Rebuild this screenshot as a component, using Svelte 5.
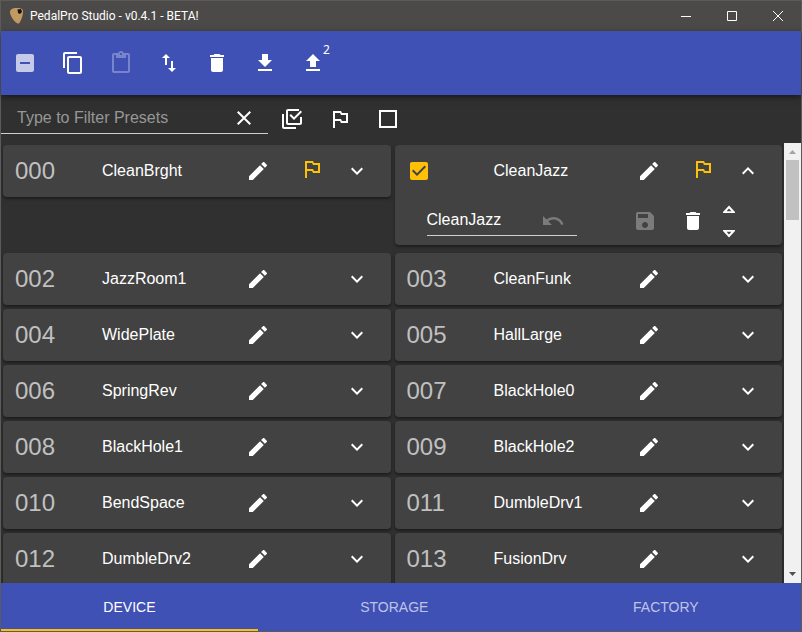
<script>
  const icons = {
    indeterminate: 'M19 3H5c-1.1 0-2 .9-2 2v14c0 1.1.9 2 2 2h14c1.1 0 2-.9 2-2V5c0-1.1-.9-2-2-2zm-2 10H7v-2h10v2z',
    copy: 'M16 1H4c-1.1 0-2 .9-2 2v14h2V3h12V1zm3 4H8c-1.1 0-2 .9-2 2v14c0 1.1.9 2 2 2h11c1.1 0 2-.9 2-2V7c0-1.1-.9-2-2-2zm0 16H8V7h11v14z',
    paste: 'M19 2h-4.18C14.4.84 13.3 0 12 0c-1.3 0-2.4.84-2.82 2H5c-1.1 0-2 .9-2 2v16c0 1.1.9 2 2 2h14c1.1 0 2-.9 2-2V4c0-1.1-.9-2-2-2zm-7 0c.55 0 1 .45 1 1s-.45 1-1 1-1-.45-1-1 .45-1 1-1zm7 18H5V4h2v3h10V4h2v16z',
    swap: 'M9 3L5 6.99h3V14h2V6.99h3L9 3zm7 14.01V10h-2v7.01h-3L15 21l4-3.99h-3z',
    trash: 'M6 19c0 1.1.9 2 2 2h8c1.1 0 2-.9 2-2V7H6v12zM19 4h-3.5l-1-1h-5l-1 1H5v2h14V4z',
    download: 'M19 9h-4V3H9v6H5l7 7 7-7zM5 18v2h14v-2H5z',
    upload: 'M9 16h6v-6h4l-7-7-7 7h4zm-4 2h14v2H5z',
    close: 'M19 6.41L17.59 5 12 10.59 6.41 5 5 6.41 10.59 12 5 17.59 6.41 19 12 13.41 17.59 19 19 17.59 13.41 12z',
    selectAll: 'M20 16V10h2v6c0 1.1-.9 2-2 2H8c-1.1 0-2-.9-2-2V4c0-1.1.9-2 2-2h11v2H8v12h12zM10.91 7.08L14 10.17 20.59 3.58 22 5l-8 8-4.5-4.5 1.41-1.42zM16 20v2H4c-1.1 0-2-.9-2-2V7h2v13h12z',
    flag: 'M14 6l-1-2H5v17h2v-7h5l1 2h7V6h-6zm4 8h-4l-1-2H7V6h5l1 2h5v6z',
    square: 'M19 5v14H5V5h14m2-2H3v18h18V3z',
    edit: 'M3 17.25V21h3.75L17.81 9.94l-3.75-3.75L3 17.25zM20.71 7.04c.39-.39.39-1.02 0-1.41l-2.34-2.34c-.39-.39-1.02-.39-1.41 0l-1.83 1.83 3.75 3.75 1.83-1.83z',
    more: 'M16.59 8.59L12 13.17 7.41 8.59 6 10l6 6 6-6z',
    less: 'M12 8l-6 6 1.41 1.41L12 10.83l4.59 4.58L18 14z',
    checked: 'M19 3H5c-1.11 0-2 .9-2 2v14c0 1.1.89 2 2 2h14c1.11 0 2-.9 2-2V5c0-1.1-.89-2-2-2zm-9 14l-5-5 1.41-1.41L10 14.17l7.59-7.59L19 8l-9 9z',
    undo: 'M12.5 8c-2.65 0-5.05.99-6.9 2.6L2 7v9h9l-3.62-3.62c1.39-1.16 3.16-1.88 5.12-1.88 3.54 0 6.55 2.31 7.6 5.5l2.37-.78C21.08 11.03 17.15 8 12.5 8z',
    save: 'M17 3H5c-1.11 0-2 .9-2 2v14c0 1.1.89 2 2 2h14c1.1 0 2-.9 2-2V7l-4-4zm-5 16c-1.66 0-3-1.34-3-3s1.34-3 3-3 3 1.34 3 3-1.34 3-3 3zm3-10H5V5h10v4z',
    up: 'M6 16v-1l6-6.500 6 6.500v1H6zM9.600 14.300h4.800L12 11.600z',
    down: 'M6 9h12v1l-6 6.500L6 10V9zM9.600 10.700L12 13.400l2.400-2.700z',
  };

  const tools = [
    { icon: 'indeterminate', label: 'Clear selection', soft: true },
    { icon: 'copy', label: 'Copy' },
    { icon: 'paste', label: 'Paste', disabled: true },
    { icon: 'swap', label: 'Swap' },
    { icon: 'trash', label: 'Delete' },
    { icon: 'download', label: 'Download' },
    { icon: 'upload', label: 'Upload', badge: 2 },
  ];

  const names = [
    'CleanBrght', 'CleanJazz', 'JazzRoom1', 'CleanFunk', 'WidePlate', 'HallLarge', 'SpringRev',
    'BlackHole0', 'BlackHole1', 'BlackHole2', 'BendSpace', 'DumbleDrv1', 'DumbleDrv2', 'FusionDrv',
  ];
  let presets = $state(
    names.map((name, i) => ({
      id: String(i).padStart(3, '0'),
      name,
      draft: name,
      flagged: i < 2,
      selected: i === 1,
      open: i === 1,
    }))
  );

  let filter = $state('');
  let tab = $state('Device');
</script>

{#snippet icon(name)}
  <svg class="icon" viewBox="0 0 24 24" aria-hidden="true"><path d={icons[name]} /></svg>
{/snippet}

<div class="window">
  <header class="titlebar">
    <svg class="logo" viewBox="0 0 16 18" aria-hidden="true">
      <path d="M1 4C2 1.500 5 1 8 1c3 0 5.500.500 6 2.500.500 3-1 8-3 11.500-1 2-2.500 2-4 .500C4 13 .500 7.500 1 4z" fill="#c09a62" />
      <path d="M8.500 2.500l3.500-.5 1 3-2 2-2-1z" fill="#17120d" />
    </svg>
    <h1>PedalPro Studio - v0.4.1 - BETA!</h1>
    <button class="caption" aria-label="Minimize"><svg viewBox="0 0 10 10"><path d="M0 5.500h10" /></svg></button>
    <button class="caption" aria-label="Maximize"><svg viewBox="0 0 10 10"><path d="M.5.5h9v9h-9z" /></svg></button>
    <button class="caption" aria-label="Close"><svg viewBox="0 0 10 10"><path d="M0 0l10 10M10 0L0 10" /></svg></button>
  </header>

  <div class="toolbar">
    {#each tools as t}
      <button class="tool" class:soft={t.soft} disabled={t.disabled} aria-label={t.label}>
        {@render icon(t.icon)}
        {#if t.badge}<span class="badge">{t.badge}</span>{/if}
      </button>
    {/each}
  </div>

  <div class="filters">
    <div class="search">
      <input type="text" placeholder="Type to Filter Presets" aria-label="Type to Filter Presets" bind:value={filter} />
      <button class="tool" aria-label="Clear filter" onclick={() => (filter = '')}>{@render icon('close')}</button>
    </div>
    <button class="tool" aria-label="Select all">{@render icon('selectAll')}</button>
    <button class="tool" aria-label="Flagged only">{@render icon('flag')}</button>
    <button class="tool" aria-label="Selected only">{@render icon('square')}</button>
  </div>

  <div class="body">
    <main class="list">
      {#each presets as p}
        <section class="card" class:open={p.open}>
          <div class="row">
            <div class="slot">
              {#if p.selected}
                <label class="check">
                  <input type="checkbox" bind:checked={p.selected} aria-label="Select {p.name}" />
                  {@render icon('checked')}
                </label>
              {:else}
                <span class="number">{p.id}</span>
              {/if}
            </div>
            <span class="name">{p.name}</span>
            <button class="edit" aria-label="Rename {p.name}">{@render icon('edit')}</button>
            <span class="flag">{#if p.flagged}{@render icon('flag')}{/if}</span>
            <button class="toggle" aria-label="Toggle details" onclick={() => (p.open = !p.open)}>
              {@render icon(p.open ? 'less' : 'more')}
            </button>
          </div>
          {#if p.open}
            <div class="details">
              <div class="rename">
                <input type="text" aria-label="Preset name" bind:value={p.draft} />
                <button class="tool" disabled aria-label="Undo">{@render icon('undo')}</button>
              </div>
              <button class="tool save" disabled aria-label="Save">{@render icon('save')}</button>
              <button class="tool" aria-label="Delete preset">{@render icon('trash')}</button>
              <div class="move">
                <button aria-label="Move up">{@render icon('up')}</button>
                <button aria-label="Move down">{@render icon('down')}</button>
              </div>
            </div>
          {/if}
        </section>
      {/each}
    </main>
    <div class="scrollbar" aria-hidden="true">
      <svg viewBox="0 0 17 17"><path d="M5 11h7L8.500 7z" fill="#a3a3a3" /></svg>
      <div class="thumb"></div>
      <svg viewBox="0 0 17 17"><path d="M5 6h7l-3.500 4z" fill="#505050" /></svg>
    </div>
  </div>

  <nav class="tabs">
    {#each ['Device', 'Storage', 'Factory'] as t}
      <button class:active={tab === t} onclick={() => (tab = t)}>{t}</button>
    {/each}
  </nav>
</div>

<style>
  :global(body) {
    margin: 0;
    background: #303030;
  }
  .window,
  .window :is(button, input) {
    font-family: 'Liberation Sans', Arial, sans-serif;
    font-size: 16px;
  }
  .window {
    box-sizing: border-box;
    display: flex;
    flex-direction: column;
    height: 100vh;
    border: 1px solid #5c5b59;
    background: #303030;
    color: #fff;
  }
  button {
    display: flex;
    align-items: center;
    justify-content: center;
    padding: 0;
    border: 0;
    background: none;
    color: inherit;
  }
  input[type='text'] {
    min-width: 0;
    padding: 0;
    border: 0;
    outline: 0;
    background: none;
    color: #fff;
  }
  .icon {
    display: block;
    flex: none;
    width: 24px;
    height: 24px;
    fill: currentColor;
  }

  .titlebar {
    display: flex;
    align-items: center;
    flex: none;
    height: 30px;
    background: #4c4a48;
  }
  .logo {
    width: 16px;
    height: 18px;
    margin: 0 5px 0 8px;
  }
  h1 {
    flex: 1;
    margin: 0;
    font: 12px Roboto, 'Open Sans', sans-serif;
  }
  .caption {
    width: 46px;
    height: 30px;
  }
  .caption svg {
    width: 10px;
    height: 10px;
    overflow: visible;
    fill: none;
    stroke: #fff;
  }

  .toolbar {
    position: relative;
    display: flex;
    align-items: center;
    flex: none;
    height: 64px;
    background: #3f51b5;
    box-shadow: 0 2px 6px rgba(0, 0, 0, 0.5);
  }
  .tool {
    position: relative;
    flex: none;
    width: 48px;
    height: 48px;
  }
  .tool.soft {
    color: #c5cae9;
  }
  .tool:disabled {
    color: rgba(255, 255, 255, 0.3);
  }
  .badge {
    position: absolute;
    top: 3px;
    left: 34px;
    font: 12px/16px 'Noto Sans', sans-serif;
  }

  .filters {
    display: flex;
    flex: none;
    height: 48px;
  }
  .search {
    box-sizing: border-box;
    display: flex;
    align-items: center;
    width: 267px;
    height: 39px;
    border-bottom: 1px solid #cfcfcf;
  }
  .search input {
    flex: 1;
    padding: 8px 0 0 16px;
  }
  .search .tool {
    padding-top: 8px;
  }
  input::placeholder {
    color: #979797;
    opacity: 1;
  }

  .body {
    display: flex;
    flex: 1;
    min-height: 0;
  }
  .list {
    display: grid;
    grid-template-columns: 1fr 1fr;
    align-content: start;
    align-items: start;
    gap: 4px;
    flex: 1;
    padding: 2px;
    overflow: hidden;
  }
  .card {
    border-radius: 4px;
    background: #424242;
    box-shadow: 0 2px 3px rgba(0, 0, 0, 0.4);
  }
  .card.open {
    margin-bottom: 4px;
  }
  .row {
    display: flex;
    align-items: center;
    height: 52px;
  }
  .slot {
    flex: none;
    width: 87px;
    padding-left: 12px;
  }
  .number {
    color: #c0c0c0;
    font-size: 24px;
  }
  .check {
    position: relative;
    display: block;
    width: 24px;
    color: #ffc107;
  }
  .check input {
    position: absolute;
    inset: 0;
    margin: 0;
    opacity: 0;
  }
  .name {
    flex: 1;
  }
  .edit {
    width: 48px;
    height: 48px;
  }
  .flag {
    width: 24px;
    height: 28px;
    margin: 0 9px 0 18px;
    color: #ffc107;
  }
  .toggle {
    width: 48px;
    height: 48px;
    margin-right: 10px;
  }

  .details {
    display: flex;
    height: 48px;
    padding-left: 32px;
  }
  .rename {
    box-sizing: border-box;
    display: flex;
    align-items: center;
    width: 150px;
    height: 39px;
    border-bottom: 1px solid #cfcfcf;
  }
  .rename input {
    flex: 1;
    padding-top: 8px;
  }
  .rename .tool {
    padding-top: 10px;
  }
  .save {
    margin-left: 44px;
  }
  .move {
    display: flex;
    flex-direction: column;
    width: 24px;
  }
  .move button {
    width: 24px;
    height: 24px;
  }

  .scrollbar {
    display: flex;
    flex-direction: column;
    width: 17px;
    background: #f1f1f1;
  }
  .scrollbar svg {
    flex: none;
    width: 17px;
    height: 17px;
  }
  .thumb {
    height: 60px;
    margin: 0 2px auto;
    background: #c1c1c1;
  }

  .tabs {
    display: flex;
    flex: none;
    height: 48px;
    background: #3f51b5;
  }
  .tabs button {
    flex: 1 1 auto;
    padding-top: 2px;
    border-bottom: 2px solid transparent;
    color: #bec4e6;
    font-size: 14px;
    text-transform: uppercase;
  }
  .tabs .active {
    border-color: #ffc107;
    color: #fff;
  }
</style>
